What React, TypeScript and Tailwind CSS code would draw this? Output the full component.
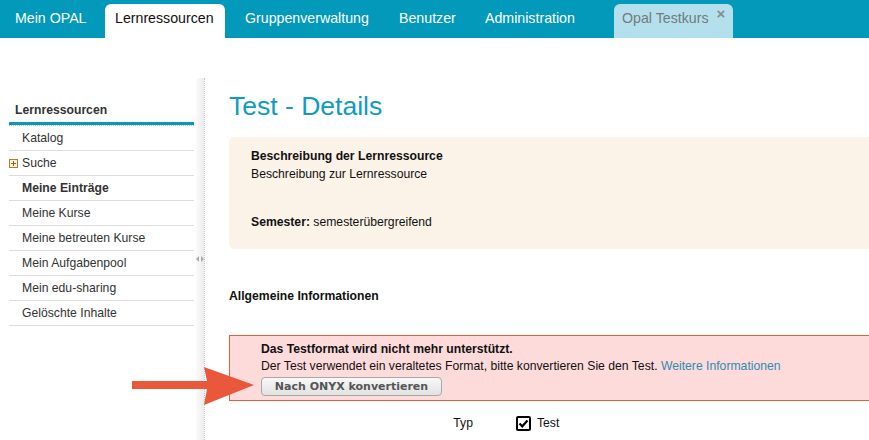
import React from "react";

const sideItems: { label: string; bold?: boolean; plus?: boolean }[] = [
  { label: "Katalog" },
  { label: "Suche", plus: true },
  { label: "Meine Einträge", bold: true },
  { label: "Meine Kurse" },
  { label: "Meine betreuten Kurse" },
  { label: "Mein Aufgabenpool" },
  { label: "Mein edu-sharing" },
  { label: "Gelöschte Inhalte" },
];

function PlusBox() {
  return (
    <svg width="9" height="9" viewBox="0 0 9 9" className="shrink-0">
      <rect x="0.5" y="0.5" width="8" height="8" fill="#fbf3de" stroke="#a9822f" />
      <path d="M2 4.5H7M4.5 2V7" stroke="#8a6420" strokeWidth="1" />
    </svg>
  );
}

export default function App() {
  return (
    <div
      className="relative w-[869px] h-[440px] overflow-hidden bg-white text-[#222]"
      style={{ fontFamily: '"Liberation Sans", Arial, sans-serif' }}
    >
      {/* Top navigation */}
      <div className="h-[38px] bg-[#0299bb] flex items-end pl-[5px] text-[14.2px]">
        <div className="w-[90px] h-[34px] flex items-center pb-[4px] pl-[10px] text-white">Mein OPAL</div>
        <div className="ml-[10px] w-[120px] h-[34px] flex items-center pb-[4px] pl-[10px] bg-white rounded-t-[6px] text-[#111]">
          Lernressourcen
        </div>
        <div className="ml-[10px] w-[144px] h-[34px] flex items-center pb-[4px] pl-[10px] text-white">Gruppenverwaltung</div>
        <div className="ml-[10px] w-[76px] h-[34px] flex items-center pb-[4px] pl-[10px] text-white">Benutzer</div>
        <div className="ml-[10px] w-[109px] h-[34px] flex items-center pb-[4px] pl-[10px] text-white">Administration</div>
        <div className="ml-[30px] w-[119px] h-[34px] flex items-center pb-[4px] pl-[8px] bg-[#b3e0ec] rounded-t-[6px] text-[#737a80]">
          <span>Opal Testkurs</span>
          <span className="ml-[8px] self-start mt-[2px] text-[15px] font-bold leading-none text-[#8b8b8b]">×</span>
        </div>
      </div>

      {/* Body */}
      <div className="flex mt-[40px]">
        {/* Sidebar */}
        <div className="w-[196px] shrink-0 pl-[9px] pr-[2px] text-[12.2px] text-[#333]">
          <div className="pt-[23px]">
            <div className="pl-[6px] leading-[18px] font-bold pb-[3px] border-b-[3px] border-[#0a9ab9]">
              Lernressourcen
            </div>
            <div className="border-b border-dotted border-[#9fc7d3]" />
          </div>
          {sideItems.map((it) => (
            <div
              key={it.label}
              className={`h-[25px] border-b border-[#dddddd] flex items-center ${it.bold ? "font-bold" : ""} ${
                it.plus ? "pl-0" : "pl-[13px]"
              }`}
            >
              {it.plus && (
                <span className="mr-[4px] flex">
                  <PlusBox />
                </span>
              )}
              {it.label}
            </div>
          ))}
        </div>

        {/* Splitter */}
        <div className="w-[9px] h-[362px] shrink-0 bg-gradient-to-r from-[#fbfbfb] to-[#ececec] border-r border-dotted border-[#c9c9c9] flex flex-col items-center pt-[178px]">
          <svg width="8" height="6" viewBox="0 0 8 6">
            <path d="M0 3L3 0V6Z" fill="#aaaaaa" />
            <path d="M8 3L5 0V6Z" fill="#aaaaaa" />
          </svg>
        </div>

        {/* Main content */}
        <div className="w-[700px] shrink-0 pl-[24px] pt-[13px] text-[12.2px] text-[#111]">
          <div className="text-[26.5px] leading-[30px] text-[#0f9bc3]">Test - Details</div>

          <div className="mt-[16px] bg-[#fbf3e8] rounded-[5px] pl-[22px] pt-[10px] pb-[18px] leading-[18px]">
            <div className="font-bold">Beschreibung der Lernressource</div>
            <div>Beschreibung zur Lernressource</div>
            <div className="mt-[30px]">
              <span className="font-bold">Semester:</span> semesterübergreifend
            </div>
          </div>

          <div className="mt-[38px] font-bold leading-[18px]">Allgemeine Informationen</div>

          <div className="mt-[30px] border border-[#e0633f] bg-[#fddbdb] pl-[31px] pt-[5px] pb-[4px] leading-[17px]">
            <div className="font-bold">Das Testformat wird nicht mehr unterstützt.</div>
            <div>
              Der Test verwendet ein veraltetes Format, bitte konvertieren Sie den Test.{" "}
              <span className="text-[#2f8bb0]">Weitere Informationen</span>
            </div>
            <button
              className="mt-[2px] w-[181px] h-[19px] rounded-[4px] border border-[#a8a8a8] bg-gradient-to-b from-[#f8f8f8] to-[#e2e2e2] text-[11px] font-bold text-[#555] leading-none flex items-center justify-center"
              style={{ fontFamily: '"DejaVu Sans", Verdana, sans-serif' }}
            >
              Nach ONYX konvertieren
            </button>
          </div>

          <div className="mt-[14px] flex items-center leading-[16px]">
            <div className="w-[244px] text-right">Typ</div>
            <div className="ml-[43px] w-[15px] h-[15px] border-2 border-black rounded-[2px] flex items-center justify-center">
              <svg width="11" height="11" viewBox="0 0 11 11">
                <path d="M1.5 5.5L4.3 8.3L9.5 2.5" fill="none" stroke="#000" strokeWidth="2.2" />
              </svg>
            </div>
            <div className="ml-[6px]">Test</div>
          </div>
        </div>
      </div>

      {/* Annotation arrow */}
      <svg className="absolute left-0 top-0 pointer-events-none" width="869" height="440" viewBox="0 0 869 440">
        <polygon
          points="132,381 207,381 204,367 254,385 204,405 207,389 132,389"
          fill="#e9583b"
        />
      </svg>
    </div>
  );
}
